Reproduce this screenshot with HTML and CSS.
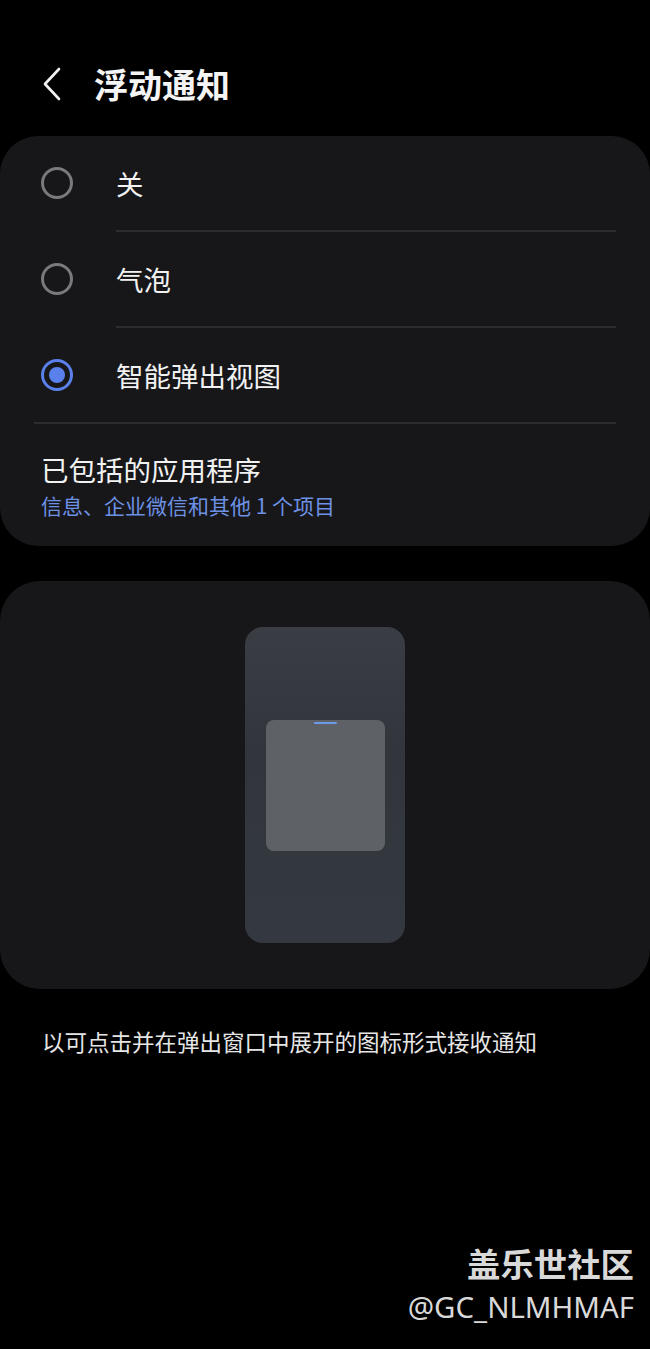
FILE: index.html
```html
<!DOCTYPE html>
<html lang="zh-CN">
<head>
<meta charset="utf-8">
<title>浮动通知</title>
<link rel="stylesheet" href="styles.css">
</head>
<body>
<div class="screen">
  <header class="header">
    <svg class="back" width="24" height="36" viewBox="0 0 24 36"><path d="M19 3 L5 18 L19 33" fill="none" stroke="#f2f2f2" stroke-width="2.6" stroke-linecap="round" stroke-linejoin="round"/></svg>
    <h1 class="title">浮动通知</h1>
  </header>

  <section class="card options">
    <div class="row">
      <span class="radio"></span>
      <span class="label">关</span>
    </div>
    <div class="divider inset"></div>
    <div class="row">
      <span class="radio"></span>
      <span class="label">气泡</span>
    </div>
    <div class="divider inset"></div>
    <div class="row">
      <span class="radio checked"></span>
      <span class="label">智能弹出视图</span>
    </div>
    <div class="divider full"></div>
    <div class="apps">
      <div class="apps-title">已包括的应用程序</div>
      <div class="apps-sub">信息、企业微信和其他 1 个项目</div>
    </div>
  </section>

  <section class="card preview">
    <div class="phone">
      <div class="popup"><span class="handle"></span></div>
    </div>
  </section>

  <p class="desc">以可点击并在弹出窗口中展开的图标形式接收通知</p>

  <div class="watermark">
    <div class="wm-name">盖乐世社区</div>
    <div class="wm-id">@GC_NLMHMAF</div>
  </div>
</div>
</body>
</html>
```

FILE: styles.css
```css
* { box-sizing: border-box; }
html, body {
  margin: 0;
  padding: 0;
  background: #000;
}
body {
  font-family: "Noto Sans CJK SC", "Noto Sans", sans-serif;
  color: #f2f2f2;
}
.screen {
  position: relative;
  width: 650px;
  height: 1349px;
  overflow: hidden;
}
.header {
  height: 136px;
  display: flex;
  align-items: center;
  padding: 32px 0 0 40px;
  gap: 30px;
}
.back { display: block; }
.title {
  margin: 0;
  font-size: 34px;
  font-weight: 700;
  line-height: 42px;
  color: #f4f4f4;
}
.card {
  background: #17171a;
  border-radius: 38px;
}
.options {
  display: flex;
  flex-direction: column;
}
.row {
  height: 94px;
  display: flex;
  align-items: center;
  padding-left: 41px;
  gap: 43px;
}
.radio {
  width: 32px;
  height: 32px;
  border-radius: 50%;
  border: 3px solid #7a7a7c;
  flex: none;
  display: flex;
  align-items: center;
  justify-content: center;
}
.radio.checked {
  border-color: #5a80ec;
}
.radio.checked::after {
  content: "";
  width: 16px;
  height: 16px;
  border-radius: 50%;
  background: #5a80ec;
}
.label {
  font-size: 27.5px;
  line-height: 36px;
  color: #f2f2f2;
}
.divider {
  height: 2px;
  background: #2d2d31;
  margin-right: 34px;
}
.divider.inset { margin-left: 116px; }
.divider.full { margin-left: 34px; }
.apps {
  padding: 27px 0 26px 41px;
}
.apps-title {
  font-size: 27.5px;
  line-height: 36px;
  color: #f2f2f2;
}
.apps-sub {
  margin-top: 4px;
  font-size: 21px;
  line-height: 29px;
  color: #6d91e4;
}
.preview {
  margin-top: 35px;
  height: 408px;
  display: flex;
  align-items: center;
  justify-content: center;
  border-radius: 40px;
}
.phone {
  width: 160px;
  height: 316px;
  border-radius: 18px;
  background: linear-gradient(#3a3e44, #32363c 40%, #343840);
  display: flex;
  align-items: center;
  justify-content: center;
}
.popup {
  width: 119px;
  height: 131px;
  border-radius: 8px;
  background: #5e6266;
  display: flex;
  justify-content: center;
  padding-top: 2px;
}
.handle {
  width: 23px;
  height: 2px;
  border-radius: 1px;
  background: #6b9ae6;
}
.desc {
  margin: 36px 0 0 42px;
  font-size: 22.5px;
  line-height: 32px;
  color: #e6e6e6;
}
.watermark {
  position: absolute;
  right: 16px;
  top: 1241px;
  text-align: right;
  color: #d9d9d9;
}
.wm-name {
  font-size: 33.4px;
  font-weight: 700;
  line-height: 44px;
}
.wm-id {
  font-family: "Noto Sans", "Open Sans", sans-serif;
  font-size: 29.4px;
  line-height: 44px;
}
```
